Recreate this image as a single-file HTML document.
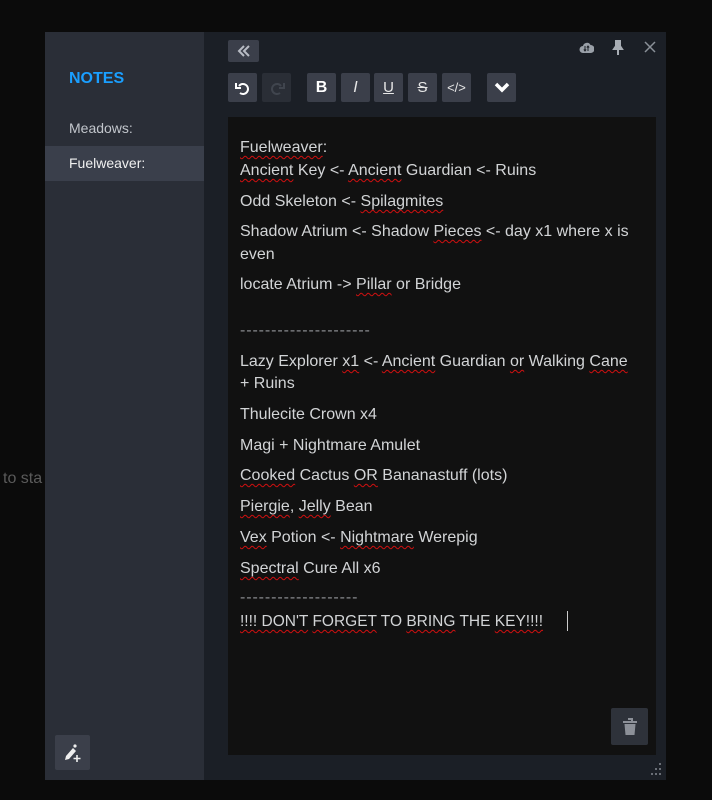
<!DOCTYPE html>
<html><head><meta charset="utf-8"><style>
*{margin:0;padding:0;box-sizing:border-box}
body{width:712px;height:800px;background:#0b0b0b;position:relative;overflow:hidden;font-family:"Liberation Sans",sans-serif}
.bgtxt{position:absolute;left:3px;top:470px;color:#5a5a5a;font-size:16px}
.panel{position:absolute;left:45px;top:32px;width:621px;height:748px;background:#1b1f26}
.side{position:absolute;left:0;top:0;width:159px;height:748px;background:#2a2e37}
.notes{position:absolute;left:24px;top:38px;color:#1a9fff;font-weight:bold;font-size:16px}
.item{position:absolute;left:0;width:159px;height:35px;line-height:35px;padding-left:24px;font-size:14px;color:#c2c6cc}
.sel{background:#3a3f4b;color:#f0f0f0}
.btn{position:absolute;background:#3b3f4a;border-radius:2px;display:flex;align-items:center;justify-content:center}
.dis{background:#2a2e36}
.ed{position:absolute;left:183px;top:85px;width:428px;height:638px;background:#111111}
.l{position:absolute;left:12px;font-size:16px;color:#d2d4d6;white-space:nowrap}
.s{text-decoration:underline wavy #d01010;text-decoration-thickness:1px;text-underline-offset:3px}
.dash{color:#8a8c90;letter-spacing:0.9px}
</style></head><body>
<div class="bgtxt">to sta</div>
<div class="panel">
 <div class="side">
  <div class="notes">NOTES</div>
  <div class="item" style="top:79px">Meadows:</div>
  <div class="item sel" style="top:114px">Fuelweaver:</div>
  <div class="btn" style="left:10px;top:703px;width:35px;height:35px">
   <svg width="20" height="20" viewBox="0 0 20 20"><path d="M2 17l1-4 7-8 3 3-7 8z" fill="#eee"/><circle cx="12" cy="3" r="1.6" fill="#eee"/><path d="M14 12v7M10.5 15.5h7" stroke="#eee" stroke-width="1.6"/></svg>
  </div>
 </div>
 <div class="btn" style="left:183px;top:8px;width:31px;height:22px"><svg width="14" height="12" viewBox="0 0 14 12"><path d="M7 1L2 6l5 5M12 1L7 6l5 5" stroke="#b8bcc4" stroke-width="2" fill="none"/></svg></div>
 <svg style="position:absolute;left:534px;top:9px" width="15" height="13" viewBox="0 0 15 13"><path d="M4 12a3.5 3.5 0 0 1 0-7 4 4 0 0 1 7.5-1A3.5 3.5 0 0 1 11.5 12z" fill="#9aa0a8"/><path d="M6 5v5M9 5v5M4.8 8.5L6 10 7.2 8.5M7.8 6.5L9 5l1.2 1.5" stroke="#1b1f26" stroke-width="1" fill="none"/></svg>
 <svg style="position:absolute;left:567px;top:8px" width="12" height="15" viewBox="0 0 12 15"><path d="M3 1h6M4 1v5L2 9h8L8 6V1M6 9v6" stroke="#a8adb4" stroke-width="2" fill="#a8adb4"/></svg>
 <svg style="position:absolute;left:599px;top:9px" width="12" height="12" viewBox="0 0 12 12"><path d="M1 1l10 10M11 1L1 11" stroke="#8a9098" stroke-width="1.5"/></svg>
 <div class="btn" style="left:183px;top:41px;width:29px;height:29px"><svg width="16" height="16" viewBox="0 0 16 16"><path d="M4 6a5 5 0 1 1 1 7" stroke="#fff" stroke-width="2" fill="none"/><path d="M1 3v5h5" stroke="#fff" stroke-width="2" fill="none"/></svg></div>
 <div class="btn dis" style="left:217px;top:41px;width:29px;height:29px"><svg width="16" height="16" viewBox="0 0 16 16"><path d="M12 6a5 5 0 1 0-1 7" stroke="#40454e" stroke-width="2" fill="none"/><path d="M15 3v5h-5" stroke="#40454e" stroke-width="2" fill="none"/></svg></div>
 <div class="btn" style="left:262px;top:41px;width:29px;height:29px;color:#fff;font-weight:bold;font-size:16px">B</div>
 <div class="btn" style="left:296px;top:41px;width:29px;height:29px;color:#e6e6e6;font-style:italic;font-size:16px">I</div>
 <div class="btn" style="left:329px;top:41px;width:29px;height:29px;color:#e6e6e6;font-size:15px;text-decoration:underline">U</div>
 <div class="btn" style="left:363px;top:41px;width:29px;height:29px;color:#e6e6e6;font-size:15px;text-decoration:line-through">S</div>
 <div class="btn" style="left:397px;top:41px;width:29px;height:29px;color:#e6e6e6;font-size:13px">&lt;/&gt;</div>
 <div class="btn" style="left:442px;top:41px;width:29px;height:29px"><svg width="16" height="12" viewBox="0 0 16 12"><path d="M2 2l6 6 6-6" stroke="#fff" stroke-width="3.5" fill="none"/></svg></div>
 <div class="ed">
  <div class="l" style="top:22px"><span class="s">Fuelweaver</span>:</div>
  <div class="l" style="top:45px"><span class="s">Ancient</span> Key &lt;- <span class="s">Ancient</span> Guardian &lt;- Ruins</div>
  <div class="l" style="top:76px">Odd Skeleton &lt;- <span class="s">Spilagmites</span></div>
  <div class="l" style="top:106px">Shadow Atrium &lt;- Shadow <span class="s">Pieces</span> &lt;- day x1 where x is</div>
  <div class="l" style="top:129px">even</div>
  <div class="l" style="top:159px">locate Atrium -&gt; <span class="s">Pillar</span> or Bridge</div>
  <div class="l dash" style="top:205px">---------------------</div>
  <div class="l" style="top:236px">Lazy Explorer <span class="s">x1</span> &lt;- <span class="s">Ancient</span> Guardian <span class="s">or</span> Walking <span class="s">Cane</span></div>
  <div class="l" style="top:258px">+ Ruins</div>
  <div class="l" style="top:289px">Thulecite Crown x4</div>
  <div class="l" style="top:320px">Magi + Nightmare Amulet</div>
  <div class="l" style="top:350px"><span class="s">Cooked</span> Cactus <span class="s">OR</span> Bananastuff (lots)</div>
  <div class="l" style="top:381px"><span class="s">Piergie</span>, <span class="s">Jelly</span> Bean</div>
  <div class="l" style="top:412px"><span class="s">Vex</span> Potion &lt;- <span class="s">Nightmare</span> Werepig</div>
  <div class="l" style="top:443px"><span class="s">Spectral</span> Cure All x6</div>
  <div class="l dash" style="top:472px">-------------------</div>
  <div class="l" style="top:496px;font-size:15.5px"><span class="s">!!!! DON'T</span> <span class="s">FORGET</span> TO <span class="s">BRING</span> THE <span class="s">KEY!!!!</span></div>
  <div style="position:absolute;left:339px;top:494px;width:1px;height:20px;background:#ccc"></div>
  <div class="btn" style="left:383px;top:591px;width:37px;height:37px;background:#2e323a"><svg width="14" height="18" viewBox="0 0 14 18"><path d="M0 4h14M5 1h4v3" stroke="#8c9098" stroke-width="2" fill="none"/><path d="M1.5 6h11l-1 11h-9z" fill="#8c9098"/></svg></div>
 </div>
 <svg style="position:absolute;left:605px;top:730px" width="12" height="14" viewBox="0 0 12 14"><g fill="#6a6e76"><rect x="9" y="1" width="2" height="2"/><rect x="5" y="6" width="2" height="2"/><rect x="9" y="6" width="2" height="2"/><rect x="1" y="11" width="2" height="2"/><rect x="5" y="11" width="2" height="2"/><rect x="9" y="11" width="2" height="2"/></g></svg>
</div>
</body></html>
